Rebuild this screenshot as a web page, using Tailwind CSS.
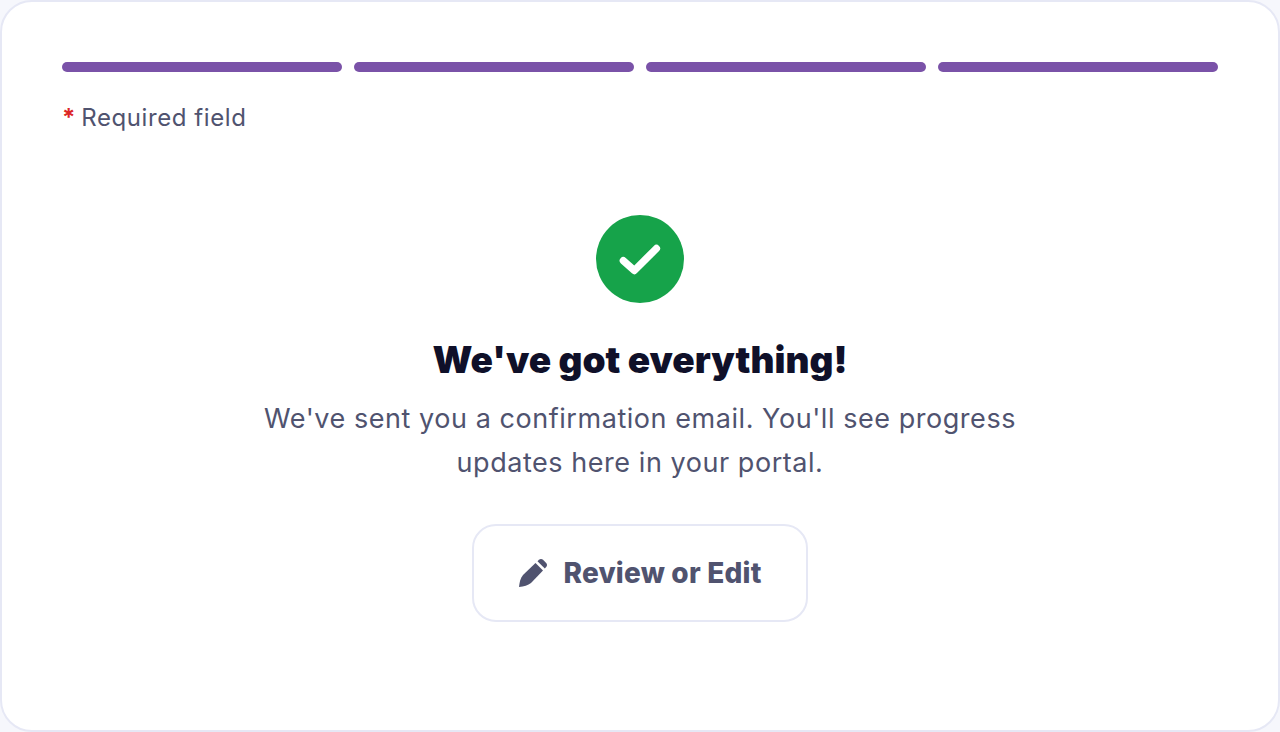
<!DOCTYPE html>
<html lang="en">
<head>
  <meta charset="UTF-8" />
  <title>Confirmation</title>
  <script src="https://cdn.jsdelivr.net/npm/@tailwindcss/browser@4"></script>
</head>
<body class="bg-[#f6f7fc] font-['Inter',sans-serif] overflow-hidden">
  <div class="w-[1280px] h-[732px] bg-white border-2 border-[#e6e8f5] rounded-[32px] px-[60px] pt-[60px]">
    <div class="flex gap-3">
      <div class="flex-1 h-2.5 rounded-full bg-[#7a52a8]"></div>
      <div class="flex-1 h-2.5 rounded-full bg-[#7a52a8]"></div>
      <div class="flex-1 h-2.5 rounded-full bg-[#7a52a8]"></div>
      <div class="flex-1 h-2.5 rounded-full bg-[#7a52a8]"></div>
    </div>
    <p class="mt-[26px] text-[24px] leading-[40px] tracking-[0.58px] text-[#50536f]"><span class="font-bold text-[#dc2626] tracking-[-1.5px]">*</span> Required field</p>

    <div class="flex flex-col items-center mt-[77px]">
      <div class="w-[88px] h-[88px] rounded-full bg-[#16a34a] flex items-center justify-center">
        <svg class="w-[49px] h-[49px]" viewBox="0 0 40 40" fill="none" stroke="#fff" stroke-width="6" stroke-linecap="round" stroke-linejoin="round">
          <path d="M6 21 L15 29 L33 11" />
        </svg>
      </div>
      <h1 class="mt-[33px] text-[37px] leading-[48px] font-black text-[#0f1029]">We've got everything!</h1>
      <p class="mt-[13px] w-[800px] text-center text-[27px] leading-[44px] tracking-[0.55px] text-[#50536f]">We've sent you a confirmation email. You'll see progress<br>updates here in your portal.</p>
      <button class="mt-[39px] w-[336px] h-[98px] bg-white border-2 border-[#e6e8f5] rounded-3xl flex items-center justify-center gap-[15px] text-[28px] font-extrabold tracking-[0.2px] text-[#50536f]">
        <svg class="w-[30px] h-[30px]" viewBox="0 0 30 30" fill="#50536f">
          <path d="M1 29 C1.5 24 2.5 20 5 17 L17.5 5 L25 12.5 L13 25 C10 27.5 6 28.5 1 29 Z" />
          <path d="M19.5 3.2 L21 1.8 C22.2 0.7 23.8 0.7 25 1.8 L28.2 5 C29.3 6.2 29.3 7.8 28.2 9 L26.8 10.5 Z" />
        </svg>
        Review or Edit
      </button>
    </div>
  </div>
</body>
</html>
